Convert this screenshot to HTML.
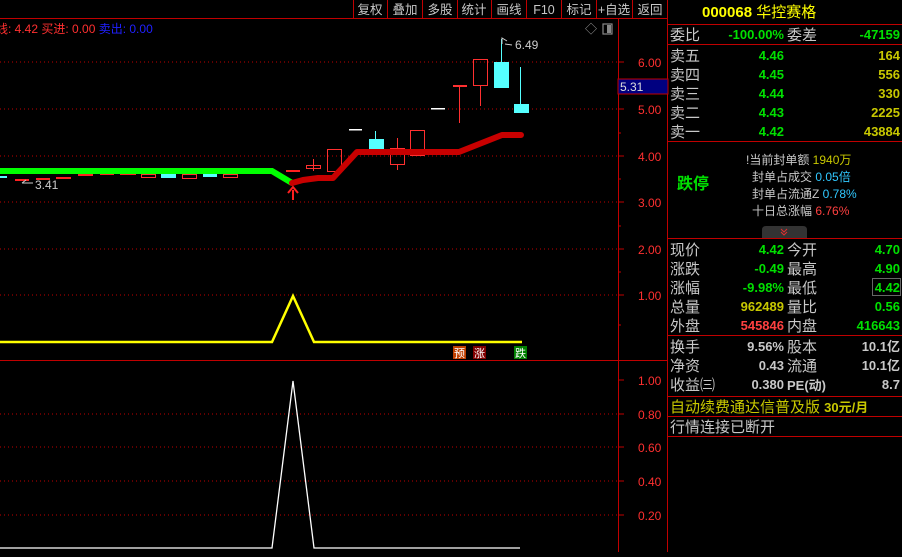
<!DOCTYPE html>
<html><head><meta charset="utf-8"><style>
body{margin:0;background:#000;width:902px;height:552px;overflow:hidden}
svg text{font-family:"Liberation Sans","Noto Sans CJK SC",sans-serif}
</style></head><body>
<svg width="902" height="552" viewBox="0 0 902 552" xmlns="http://www.w3.org/2000/svg">
<rect width="902" height="552" fill="#000"/>
<!-- toolbar -->
<g stroke="#c00000" stroke-width="1">
<line x1="0" y1="18.5" x2="668" y2="18.5"/>
<line x1="353.5" y1="0" x2="353.5" y2="18"/><line x1="387.5" y1="0" x2="387.5" y2="18"/><line x1="422.5" y1="0" x2="422.5" y2="18"/><line x1="457.5" y1="0" x2="457.5" y2="18"/><line x1="491.5" y1="0" x2="491.5" y2="18"/><line x1="526.5" y1="0" x2="526.5" y2="18"/><line x1="561.5" y1="0" x2="561.5" y2="18"/><line x1="596.5" y1="0" x2="596.5" y2="18"/><line x1="632.5" y1="0" x2="632.5" y2="18"/><line x1="667.5" y1="0" x2="667.5" y2="552"/>
</g>
<g fill="#c8c8c8" font-size="12.5" text-anchor="middle">
<text x="370" y="14">复权</text><text x="405" y="14">叠加</text><text x="440" y="14">多股</text><text x="474" y="14">统计</text><text x="509" y="14">画线</text><text x="544" y="14">F10</text><text x="579" y="14">标记</text><text x="614" y="14">+自选</text><text x="650" y="14">返回</text>
</g>
<text x="-4" y="33" font-size="12" fill="#ff3030">线: 4.42 买进: 0.00 <tspan fill="#2020ff">卖出: 0.00</tspan></text>
<text x="585" y="33" font-size="12" fill="#999">◇</text>
<rect x="603" y="24" width="9" height="10" fill="none" stroke="#888" stroke-width="1.2"/><rect x="607" y="25" width="4" height="8" fill="#888"/>
<!-- axis -->
<line x1="618.5" y1="19" x2="618.5" y2="552" stroke="#c00000"/>
<line x1="0" y1="360.5" x2="668" y2="360.5" stroke="#c00000"/>
<g stroke="#c00000" stroke-dasharray="1,3">
<line x1="0" y1="62" x2="618" y2="62"/><line x1="0" y1="109" x2="618" y2="109"/><line x1="0" y1="156" x2="618" y2="156"/><line x1="0" y1="202" x2="618" y2="202"/><line x1="0" y1="249" x2="618" y2="249"/><line x1="0" y1="295" x2="618" y2="295"/>
<line x1="0" y1="414" x2="618" y2="414"/><line x1="0" y1="447" x2="618" y2="447"/><line x1="0" y1="481" x2="618" y2="481"/><line x1="0" y1="515" x2="618" y2="515"/>
</g>
<g stroke="#c00000">
<line x1="618" y1="62" x2="624" y2="62"/><line x1="618" y1="109" x2="624" y2="109"/><line x1="618" y1="156" x2="624" y2="156"/><line x1="618" y1="202" x2="624" y2="202"/><line x1="618" y1="249" x2="624" y2="249"/><line x1="618" y1="295" x2="624" y2="295"/>
<line x1="618" y1="86" x2="621" y2="86"/><line x1="618" y1="133" x2="621" y2="133"/><line x1="618" y1="179" x2="621" y2="179"/><line x1="618" y1="226" x2="621" y2="226"/><line x1="618" y1="272" x2="621" y2="272"/><line x1="618" y1="325" x2="621" y2="325"/>
<line x1="618" y1="380" x2="624" y2="380"/><line x1="618" y1="414" x2="624" y2="414"/><line x1="618" y1="447" x2="624" y2="447"/><line x1="618" y1="481" x2="624" y2="481"/><line x1="618" y1="515" x2="624" y2="515"/>
</g>
<g fill="#ff3030" font-size="12">
<text x="638" y="67">6.00</text><text x="638" y="114">5.00</text><text x="638" y="161">4.00</text><text x="638" y="207">3.00</text><text x="638" y="254">2.00</text><text x="638" y="300">1.00</text>
<text x="638" y="385">1.00</text><text x="638" y="419">0.80</text><text x="638" y="452">0.60</text><text x="638" y="486">0.40</text><text x="638" y="520">0.20</text>
</g>
<rect x="618" y="79" width="50" height="15" fill="#000080" stroke="#c00000"/>
<text x="620" y="91" font-size="12" fill="#ddd">5.31</text>
<!-- small candles -->
<g fill="#ff2020">
<rect x="15" y="179" width="14" height="2"/><rect x="36" y="178" width="14" height="2"/><rect x="56" y="177" width="15" height="2"/><rect x="78" y="174" width="15" height="2"/><rect x="100" y="174" width="14" height="1"/><rect x="120" y="174" width="16" height="1"/>
<rect x="286" y="170" width="14" height="2"/><rect x="300" y="155" width="1" height="0"/>
</g>
<g fill="none" stroke="#ff3030">
<rect x="141.5" y="174.5" width="14" height="3"/><rect x="182.5" y="174.5" width="14" height="4"/><rect x="223.5" y="174.5" width="14" height="3"/>
<rect x="306.5" y="165.5" width="14" height="3"/><line x1="313.5" y1="159" x2="313.5" y2="171"/>
<rect x="327.5" y="149.5" width="14" height="22"/>
<rect x="390.5" y="148.5" width="14" height="16"/><line x1="397.5" y1="138" x2="397.5" y2="148"/><line x1="397.5" y1="165" x2="397.5" y2="170"/>
<rect x="410.5" y="130.5" width="14" height="25"/>
<rect x="473.5" y="59.5" width="14" height="26"/><line x1="480.5" y1="86" x2="480.5" y2="106"/>
<line x1="459.5" y1="86" x2="459.5" y2="123"/>
</g>
<rect x="453" y="85" width="14" height="2" fill="#ff3030"/>
<g fill="#55ffff">
<rect x="0" y="176" width="7" height="2"/><rect x="161" y="174" width="15" height="4"/><rect x="203" y="174" width="14" height="3"/>
<rect x="369" y="139" width="15" height="10"/><rect x="375" y="131" width="1" height="8"/>
<rect x="494" y="62" width="15" height="26"/><rect x="501" y="39" width="1" height="23"/>
<rect x="514" y="104" width="15" height="9"/><rect x="520" y="67" width="1" height="37"/>
</g>
<rect x="349" y="129" width="13" height="1.5" fill="#fff"/><rect x="431" y="108" width="14" height="1.5" fill="#fff"/>
<text x="515" y="49" font-size="12" fill="#ccc">6.49</text>
<path d="M502 44 L502 38 L507 41 M505 44 L512 45" stroke="#ccc" fill="none"/>
<text x="35" y="189" font-size="12" fill="#ccc">3.41</text>
<path d="M22 183 L33 183 M22 183 L26 180" stroke="#ccc" fill="none"/>
<!-- MA lines -->
<polyline points="0,171 272,171 292,183" stroke="#00ff00" stroke-width="6" fill="none"/>
<polyline points="292,183 303,180 318,178 333,178 357,152 459,152 502,135 521,135" stroke="#c80000" stroke-width="6" fill="none" stroke-linejoin="round" stroke-linecap="round"/>
<path d="M293 200 L293 190 M288 193 L293 187 L298 193" stroke="#ff2020" stroke-width="2" fill="none"/>
<!-- yellow -->
<polyline points="0,342 272,342 293,296 314,342 522,342" stroke="#ffff00" stroke-width="2.5" fill="none"/>
<rect x="453" y="346" width="13" height="13" fill="#c04000"/><text x="459.5" y="357" font-size="11" fill="#fff" text-anchor="middle">预</text>
<rect x="473" y="346" width="13" height="13" fill="#800000"/><text x="479.5" y="357" font-size="11" fill="#fff" text-anchor="middle">涨</text>
<rect x="514" y="346" width="13" height="13" fill="#008000"/><text x="520.5" y="357" font-size="11" fill="#fff" text-anchor="middle">跌</text>
<!-- white -->
<polyline points="0,548 272,548 293,381 314,548 520,548" stroke="#fff" stroke-width="1.3" fill="none"/>
<!-- right panel -->
<g stroke="#c00000"><line x1="668" y1="24.5" x2="902" y2="24.5"/><line x1="668" y1="44.5" x2="902" y2="44.5"/><line x1="668" y1="141.5" x2="902" y2="141.5"/><line x1="668" y1="238.5" x2="902" y2="238.5"/><line x1="668" y1="335.5" x2="902" y2="335.5"/><line x1="668" y1="396.5" x2="902" y2="396.5"/><line x1="668" y1="416.5" x2="902" y2="416.5"/><line x1="668" y1="436.5" x2="902" y2="436.5"/></g>
<text x="702" y="17" font-size="15" fill="#ffff00" font-weight="bold">000068 <tspan font-weight="normal">华控赛格</tspan></text>
<g font-size="15" fill="#c8c8c8">
<text x="670" y="40">委比</text><text x="787" y="40">委差</text>
<text x="670" y="61">卖五</text><text x="670" y="80">卖四</text><text x="670" y="99">卖三</text><text x="670" y="118">卖二</text><text x="670" y="137">卖一</text>
<text x="670" y="255">现价</text><text x="787" y="255">今开</text>
<text x="670" y="274">涨跌</text><text x="787" y="274">最高</text>
<text x="670" y="293">涨幅</text><text x="787" y="293">最低</text>
<text x="670" y="312">总量</text><text x="787" y="312">量比</text>
<text x="670" y="331">外盘</text><text x="787" y="331">内盘</text>
<text x="670" y="352">换手</text><text x="787" y="352">股本</text>
<text x="670" y="371">净资</text><text x="787" y="371">流通</text>
<text x="670" y="390">收益㈢</text><text x="787" y="390" font-weight="bold" font-size="13">PE(动)</text>
<text x="670" y="432">行情连接已断开</text>
</g>
<g font-size="13" font-weight="bold" text-anchor="end">
<text x="784" y="39" fill="#00e000">-100.00%</text><text x="900" y="39" fill="#00e000">-47159</text>
<text x="784" y="60" fill="#00e000">4.46</text><text x="900" y="60" fill="#c8c800">164</text>
<text x="784" y="79" fill="#00e000">4.45</text><text x="900" y="79" fill="#c8c800">556</text>
<text x="784" y="98" fill="#00e000">4.44</text><text x="900" y="98" fill="#c8c800">330</text>
<text x="784" y="117" fill="#00e000">4.43</text><text x="900" y="117" fill="#c8c800">2225</text>
<text x="784" y="136" fill="#00e000">4.42</text><text x="900" y="136" fill="#c8c800">43884</text>
<text x="784" y="254" fill="#00e000">4.42</text><text x="900" y="254" fill="#00e000">4.70</text>
<text x="784" y="273" fill="#00e000">-0.49</text><text x="900" y="273" fill="#00e000">4.90</text>
<text x="784" y="292" fill="#00e000">-9.98%</text><text x="900" y="292" fill="#00e000">4.42</text>
<text x="784" y="311" fill="#c8c800">962489</text><text x="900" y="311" fill="#00e000">0.56</text>
<text x="784" y="330" fill="#ff4040">545846</text><text x="900" y="330" fill="#00e000">416643</text>
<text x="784" y="351" fill="#c8c8c8">9.56%</text><text x="900" y="351" fill="#c8c8c8">10.1亿</text>
<text x="784" y="370" fill="#c8c8c8">0.43</text><text x="900" y="370" fill="#c8c8c8">10.1亿</text>
<text x="784" y="389" fill="#c8c8c8">0.380</text><text x="900" y="389" fill="#c8c8c8">8.7</text>
</g>
<rect x="872.5" y="278.5" width="28" height="17" fill="none" stroke="#666"/>
<text x="677" y="189" font-size="16" font-weight="bold" fill="#00e000">跌停</text>
<g font-size="12" fill="#c8c8c8">
<text x="746" y="164">!当前封单额 <tspan fill="#c8c800">1940万</tspan></text>
<text x="752" y="181">封单占成交 <tspan fill="#30c8ff">0.05倍</tspan></text>
<text x="752" y="198">封单占流通Z <tspan fill="#30c8ff">0.78%</tspan></text>
<text x="752" y="215">十日总涨幅 <tspan fill="#ff4040">6.76%</tspan></text>
</g>
<path d="M762 238 L762 230 Q762 226 766 226 L803 226 Q807 226 807 230 L807 238 Z" fill="#333"/>
<path d="M781 229 L784 232 L787 229 M781 232 L784 235 L787 232" stroke="#e03030" fill="none"/>
<text x="670" y="412" font-size="15" fill="#c8c800">自动续费通达信普及版 <tspan font-weight="bold" font-size="13">30元/月</tspan></text>
</svg>
</body></html>
